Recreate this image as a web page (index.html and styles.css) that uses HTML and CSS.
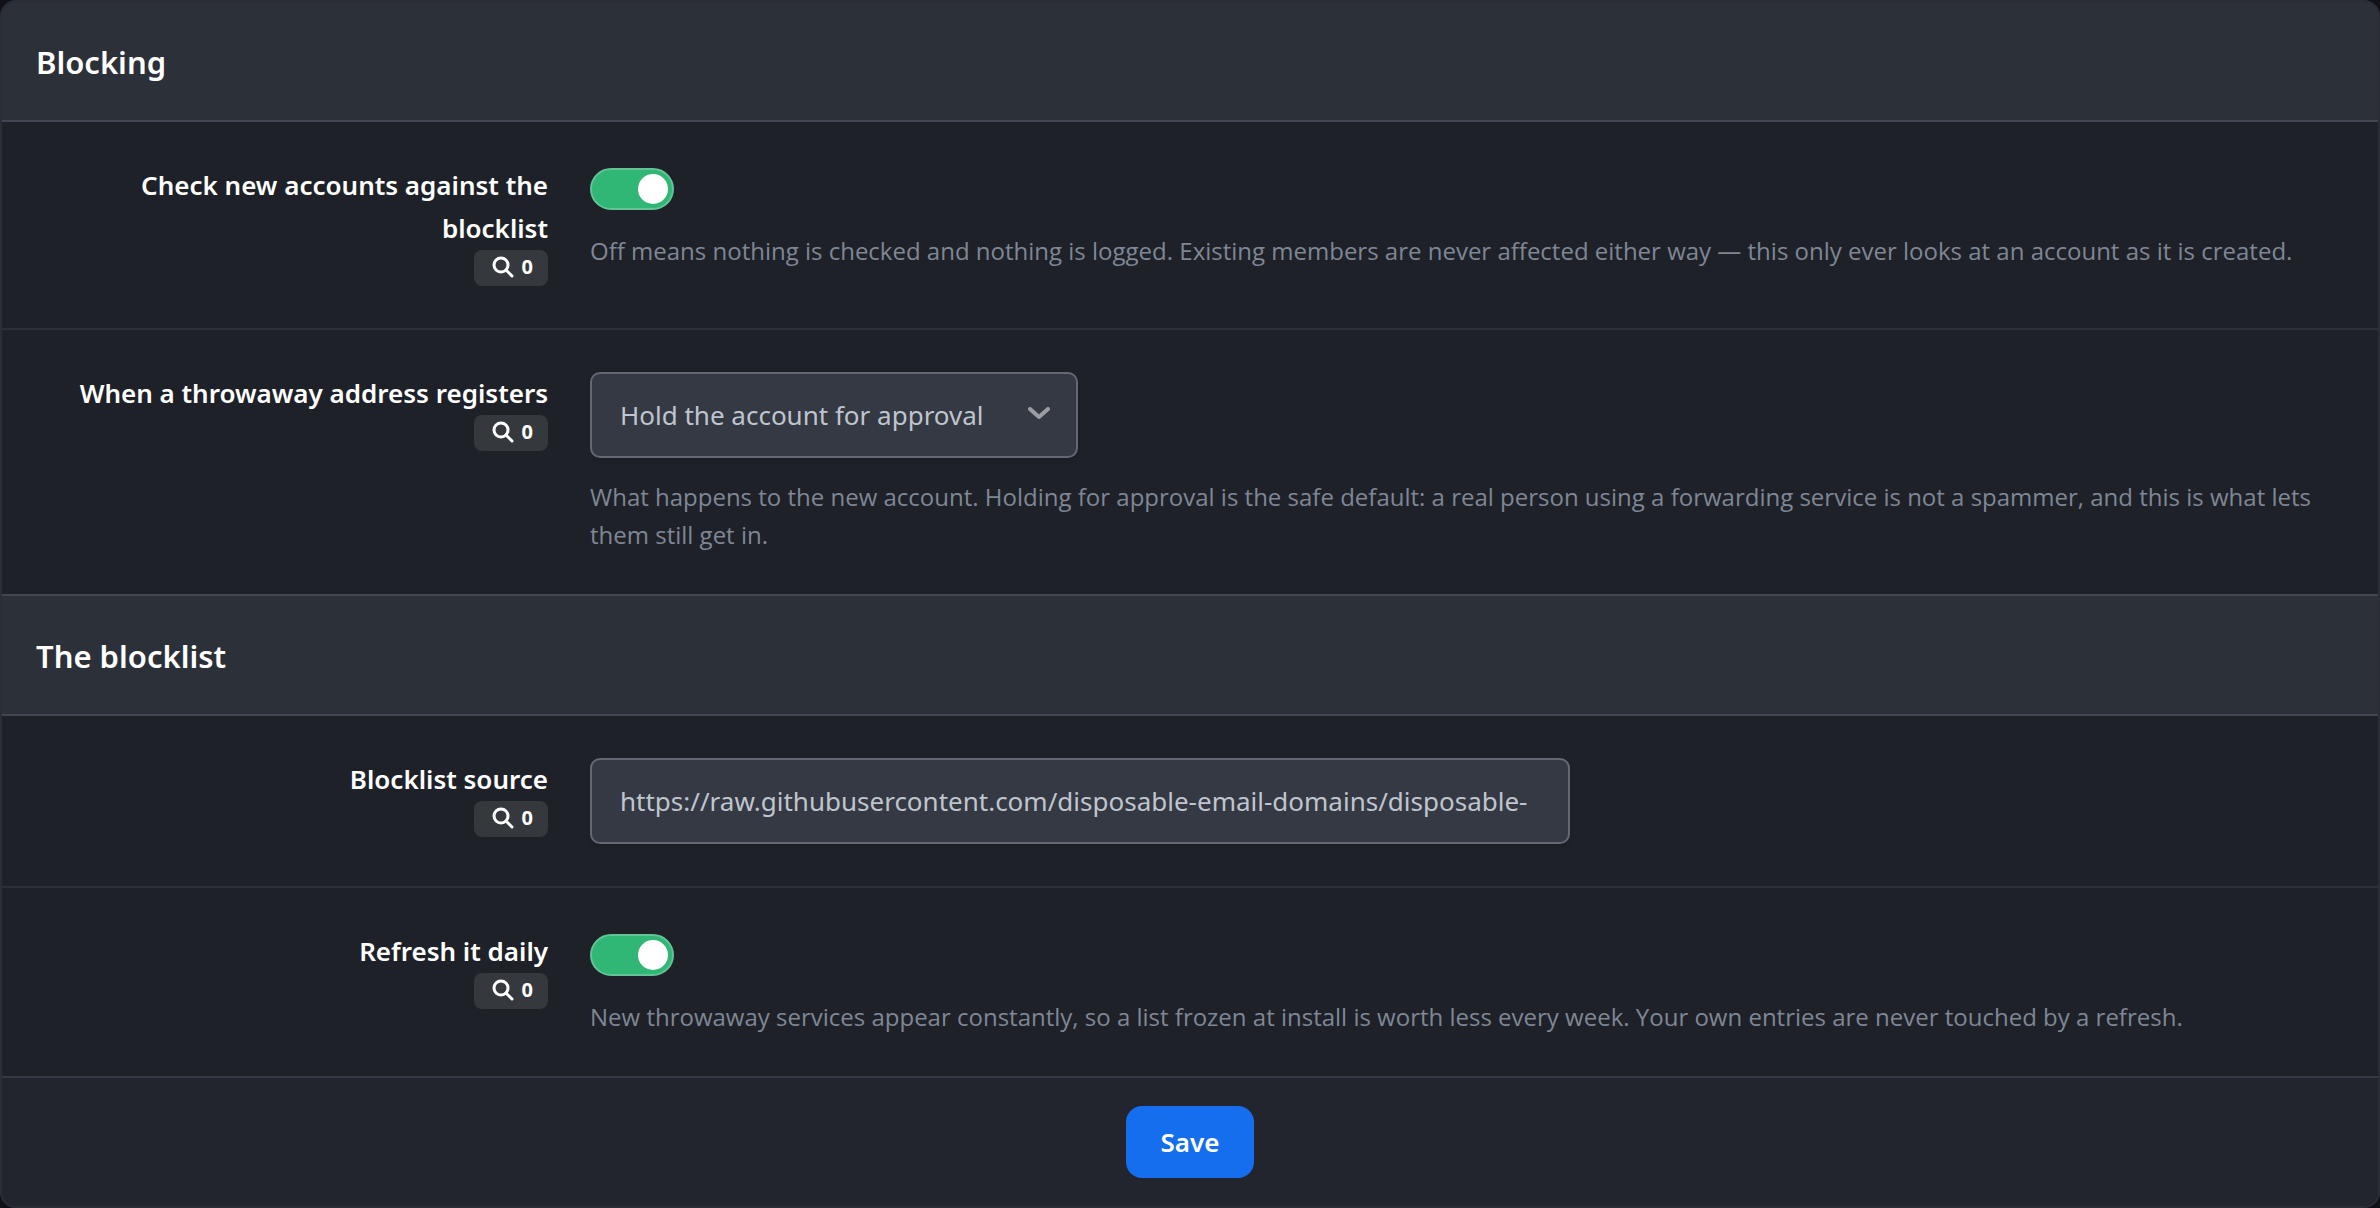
FILE: index.html
```html
<!DOCTYPE html>
<html lang="en">
<head>
<meta charset="utf-8">
<meta name="viewport" content="width=device-width, initial-scale=1">
<title>Blocking</title>
<link rel="stylesheet" href="styles.css">
</head>
<body>
<svg class="sprite" aria-hidden="true">
  <symbol id="icon-search" viewBox="0 0 22 22">
    <circle cx="9" cy="9" r="7"/>
    <path d="M14 14l6 6"/>
  </symbol>
</svg>
<form class="panel">
  <section>
    <h2 class="section-title">Blocking</h2>
    <div class="row">
      <div class="row-label">
        <label for="check">Check new accounts against the blocklist</label>
        <button type="button" class="badge"><svg class="badge-icon" aria-hidden="true"><use href="#icon-search"/></svg>0</button>
      </div>
      <div class="row-control">
        <input type="checkbox" class="toggle" id="check" checked>
        <p class="help">Off means nothing is checked and nothing is logged. Existing members are never affected either way — this only ever looks at an account as it is created.</p>
      </div>
    </div>
    <div class="row">
      <div class="row-label">
        <label for="action">When a throwaway address registers</label>
        <button type="button" class="badge"><svg class="badge-icon" aria-hidden="true"><use href="#icon-search"/></svg>0</button>
      </div>
      <div class="row-control">
        <div class="select">
          <select class="field" id="action">
            <option>Hold the account for approval</option>
          </select>
          <svg class="select-arrow" viewBox="0 0 22 12" aria-hidden="true"><path d="M2 2l9 8 9-8"/></svg>
        </div>
        <p class="help">What happens to the new account. Holding for approval is the safe default: a real person using a forwarding service is not a spammer, and this is what lets them still get in.</p>
      </div>
    </div>
  </section>
  <section>
    <h2 class="section-title">The blocklist</h2>
    <div class="row">
      <div class="row-label">
        <label for="source">Blocklist source</label>
        <button type="button" class="badge"><svg class="badge-icon" aria-hidden="true"><use href="#icon-search"/></svg>0</button>
      </div>
      <div class="row-control">
        <input type="text" class="field field-wide" id="source" value="https://raw.githubusercontent.com/disposable-email-domains/disposable-">
      </div>
    </div>
    <div class="row">
      <div class="row-label">
        <label for="refresh">Refresh it daily</label>
        <button type="button" class="badge"><svg class="badge-icon" aria-hidden="true"><use href="#icon-search"/></svg>0</button>
      </div>
      <div class="row-control">
        <input type="checkbox" class="toggle" id="refresh" checked>
        <p class="help">New throwaway services appear constantly, so a list frozen at install is worth less every week. Your own entries are never touched by a refresh.</p>
      </div>
    </div>
  </section>
  <div class="actions"><button type="submit" class="save">Save</button></div>
</form>
</body>
</html>
```
FILE: styles.css
```css
* {
  box-sizing: border-box;
}

body {
  margin: 0;
  background: #111217;
  color: #fff;
  font: 400 26px/44px "Noto Sans", "Open Sans", sans-serif;
}

.sprite {
  display: none;
}

.panel {
  overflow: hidden;
  border: 2px solid #2b2e36;
  border-radius: 16px;
  background: #1e2128;
}

.section-title {
  margin: 0;
  padding: 38px 34px 36px;
  border-bottom: 2px solid #414651;
  background: #2c3038;
  font-size: 31px;
  font-weight: 600;
  line-height: 44px;
}

section + section {
  border-top: 2px solid #414651;
}

.row {
  display: grid;
  grid-template-columns: 500px 1fr;
  gap: 42px;
  padding: 42px 46px 40px;
}

.row + .row {
  border-top: 2px solid #2c3038;
}

.row-label {
  display: flex;
  flex-direction: column;
  align-items: flex-end;
  padding-bottom: 2px;
  font-weight: 600;
  line-height: 43px;
  text-align: right;
}

.row-control {
  display: flex;
  flex-direction: column;
  align-items: flex-start;
}

.badge {
  display: flex;
  align-items: center;
  gap: 8px;
  height: 36px;
  padding: 0 15px 3px 18px;
  border: 0;
  border-radius: 8px;
  background: #35383c;
  color: #fff;
  font: 700 20px/33px "Noto Sans", "Open Sans", sans-serif;
}

.badge-icon {
  width: 22px;
  height: 22px;
  fill: none;
  stroke: currentColor;
  stroke-width: 3;
  stroke-linecap: round;
}

.toggle {
  appearance: none;
  display: flex;
  align-items: center;
  width: 84px;
  height: 42px;
  margin: 4px 0;
  padding: 0 4px;
  border: 2px solid #63c397;
  border-radius: 21px;
  background: #30b775;
}

.toggle::before {
  content: "";
  width: 30px;
  height: 30px;
  border-radius: 50%;
  background: #fff;
}

.toggle:checked {
  justify-content: flex-end;
}

.help {
  margin: 18px 0 0;
  color: #7f8795;
  font: 400 24px/38px "Open Sans", "Noto Sans", sans-serif;
}

.select {
  position: relative;
  width: 488px;
  max-width: 100%;
}

.field {
  appearance: none;
  display: block;
  width: 100%;
  height: 86px;
  padding: 0 28px;
  border: 2px solid #636873;
  border-radius: 10px;
  margin: 0 0 2px;
  background: #353943;
  box-shadow: 0 2px 4px rgba(0, 0, 0, 0.1);
  color: #bfc5ce;
  font: inherit;
}

.field-wide {
  max-width: 980px;
}

.select-arrow {
  position: absolute;
  top: 35px;
  right: 28px;
  width: 22px;
  height: 12px;
  fill: none;
  stroke: #9b9da3;
  stroke-width: 4;
  stroke-linecap: round;
  stroke-linejoin: round;
  pointer-events: none;
}

.actions {
  display: flex;
  justify-content: center;
  padding: 28px;
  border-top: 2px solid #353943;
  background: #22252d;
}

.save {
  min-width: 128px;
  height: 72px;
  padding: 0 32px;
  border: 0;
  border-radius: 16px;
  background: #156eed;
  color: #fff;
  font: inherit;
  font-weight: 600;
}
```
